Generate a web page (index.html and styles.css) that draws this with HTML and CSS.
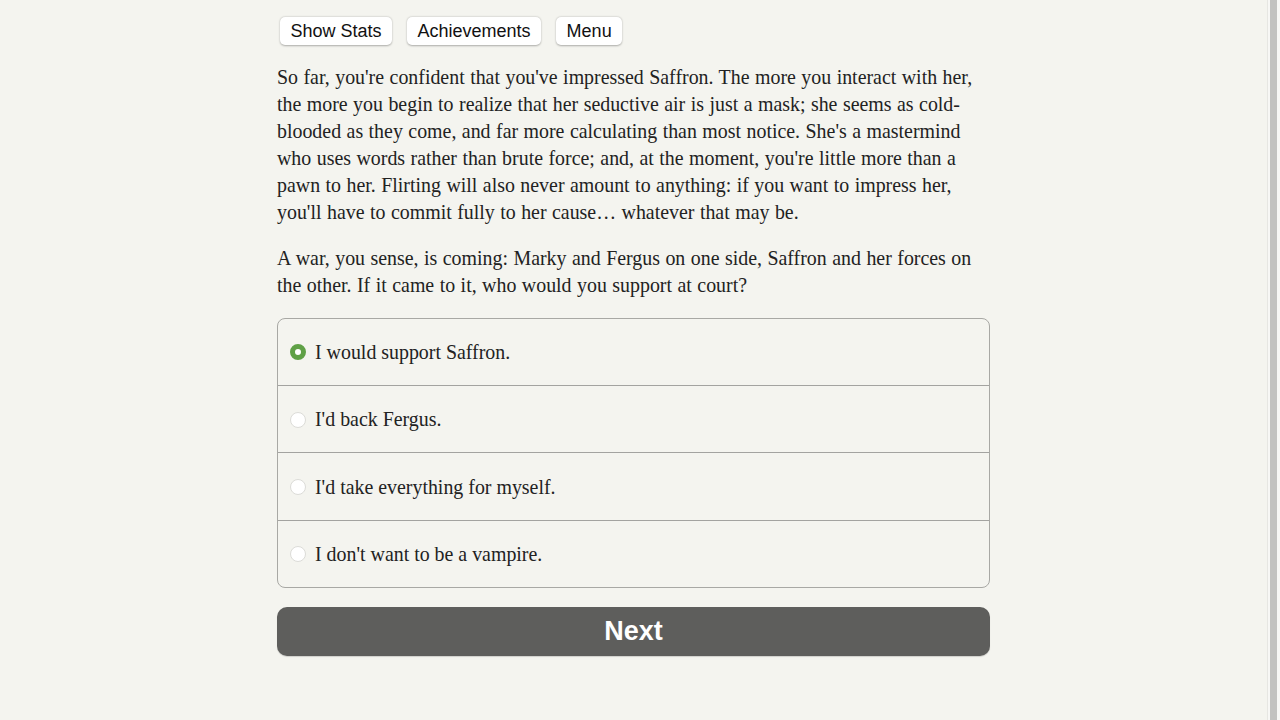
FILE: index.html
```html
<!DOCTYPE html>
<html lang="en">
<head>
<meta charset="utf-8">
<title>Choice</title>
<link rel="stylesheet" href="styles.css">
</head>
<body>
<div class="page">
  <main class="column">
    <nav class="topbar">
      <button class="btn">Show Stats</button>
      <button class="btn">Achievements</button>
      <button class="btn">Menu</button>
    </nav>
    <p class="story">So far, you're confident that you've impressed Saffron. The more you interact with her, the more you begin to realize that her seductive air is just a mask; she seems as cold-blooded as they come, and far more calculating than most notice. She's a mastermind who uses words rather than brute force; and, at the moment, you're little more than a pawn to her. Flirting will also never amount to anything: if you want to impress her, you'll have to commit fully to her cause&hellip; whatever that may be.</p>
    <p class="story">A war, you sense, is coming: Marky and Fergus on one side, Saffron and her forces on the other. If it came to it, who would you support at court?</p>
    <div class="choices">
      <label class="choice"><span class="radio selected"></span><span class="label">I would support Saffron.</span></label>
      <label class="choice"><span class="radio"></span><span class="label">I'd back Fergus.</span></label>
      <label class="choice"><span class="radio"></span><span class="label">I'd take everything for myself.</span></label>
      <label class="choice"><span class="radio"></span><span class="label">I don't want to be a vampire.</span></label>
    </div>
    <button class="next">Next</button>
  </main>
  <div class="scrollbar"><div class="thumb"></div></div>
</div>
</body>
</html>
```
FILE: styles.css
```css
html, body {
  margin: 0;
  padding: 0;
  height: 100%;
  background: #f4f4ef;
}
.page {
  display: flex;
  height: 100%;
}
.column {
  flex: 1;
  display: flex;
  flex-direction: column;
  align-items: center;
}
.topbar, .story, .choices, .next {
  width: 713px;
  box-sizing: border-box;
}
.topbar {
  display: flex;
  gap: 15px;
  padding: 17px 0 0 3px;
}
.btn {
  font-family: "Liberation Sans", Arial, sans-serif;
  font-size: 18px;
  color: #111;
  background: #fff;
  border: none;
  border-radius: 5px;
  box-shadow: 0 0.5px 2px rgba(0,0,0,0.3);
  height: 28px;
  padding: 0 10.5px;
  line-height: 28px;
}
.story {
  font-family: "Liberation Serif", "Times New Roman", serif;
  font-size: 19.9px;
  line-height: 27px;
  color: #222;
  margin: 19px 0 0 0;
  word-spacing: 0.5px;
}
.story + .story {
  margin-top: 19px;
}
.choices {
  margin-top: 19px;
  border: 1px solid #a8a8a4;
  border-radius: 8px;
  display: flex;
  flex-direction: column;
}
.choice {
  box-sizing: border-box;
  display: flex;
  align-items: center;
  height: 66px;
  padding-left: 12px;
  gap: 9px;
  font-family: "Liberation Serif", "Times New Roman", serif;
  font-size: 19.9px;
  color: #222;
}
.choice + .choice {
  border-top: 1px solid #a3a3a0;
  height: 67.4px;
  padding-top: 1px;
}
.radio {
  width: 16px;
  height: 16px;
  box-sizing: border-box;
  border-radius: 50%;
  border: 1px solid #dcdcd8;
  background: #fff;
  flex: none;
}
.radio.selected {
  border: 5px solid #5fa046;
  background: #fff;
}
.next {
  margin-top: 18.8px;
  height: 49px;
  background: #5e5e5c;
  border: none;
  border-radius: 10px;
  color: #fff;
  font-family: "Liberation Sans", Arial, sans-serif;
  font-weight: bold;
  font-size: 27px;
  padding-top: 2px;
  box-shadow: 0 1px 1px rgba(0,0,0,0.15);
}
.scrollbar {
  width: 13px;
  flex: none;
  background: #f7f7f5;
  border-left: 1px solid #e6e6e2;
  box-sizing: border-box;
  padding: 0 3px 0 2px;
}
.thumb {
  height: 100%;
  background: #c2c2c0;
}
```
